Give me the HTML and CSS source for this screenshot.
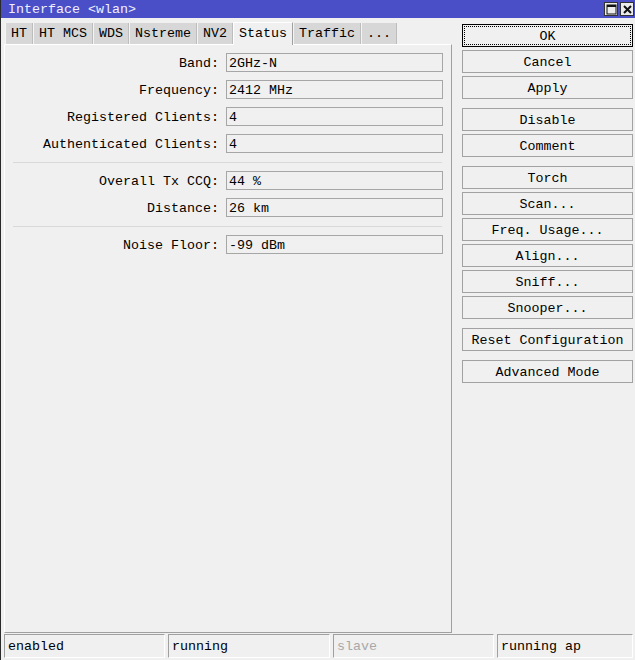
FILE: index.html
```html
<!DOCTYPE html>
<html>
<head>
<meta charset="utf-8">
<link rel="stylesheet" href="styles.css">
</head>
<body>
<div class="window">
  <div class="titlebar">
    <span class="title">Interface &lt;wlan&gt;</span>
    <div class="tb-buttons">
      <span class="tb-btn">
        <svg width="11" height="11" viewBox="0 0 11 11"><rect x="1" y="1" width="9" height="9" fill="none" stroke="#111" stroke-width="1"/><rect x="1" y="1" width="9" height="2" fill="#111"/></svg>
      </span>
      <span class="tb-btn">
        <svg width="11" height="11" viewBox="0 0 11 11"><path d="M2 2 L9 9 M9 2 L2 9" stroke="#111" stroke-width="2"/></svg>
      </span>
    </div>
  </div>
  <div class="main">
    <div class="left">
      <div class="tabs">
        <div class="tab">HT</div>
        <div class="tab">HT MCS</div>
        <div class="tab">WDS</div>
        <div class="tab">Nstreme</div>
        <div class="tab">NV2</div>
        <div class="tab active">Status</div>
        <div class="tab">Traffic</div>
        <div class="tab">...</div>
      </div>
      <div class="panel">
        <div class="row"><div class="label">Band:</div><div class="box">2GHz-N</div></div>
        <div class="row"><div class="label">Frequency:</div><div class="box">2412 MHz</div></div>
        <div class="row"><div class="label">Registered Clients:</div><div class="box">4</div></div>
        <div class="row"><div class="label">Authenticated Clients:</div><div class="box">4</div></div>
        <div class="sep"></div>
        <div class="row"><div class="label">Overall Tx CCQ:</div><div class="box">44 %</div></div>
        <div class="row"><div class="label">Distance:</div><div class="box">26 km</div></div>
        <div class="sep"></div>
        <div class="row"><div class="label">Noise Floor:</div><div class="box">-99 dBm</div></div>
      </div>
    </div>
    <div class="right">
      <div class="group">
        <div class="btn default">OK</div>
        <div class="btn">Cancel</div>
        <div class="btn">Apply</div>
      </div>
      <div class="group">
        <div class="btn">Disable</div>
        <div class="btn">Comment</div>
      </div>
      <div class="group">
        <div class="btn">Torch</div>
        <div class="btn">Scan...</div>
        <div class="btn">Freq. Usage...</div>
        <div class="btn">Align...</div>
        <div class="btn">Sniff...</div>
        <div class="btn">Snooper...</div>
      </div>
      <div class="group">
        <div class="btn">Reset Configuration</div>
      </div>
      <div class="group">
        <div class="btn">Advanced Mode</div>
      </div>
    </div>
  </div>
  <div class="statusbar">
    <div class="sbox s1">enabled</div>
    <div class="sbox s2">running</div>
    <div class="sbox s3 dim">slave</div>
    <div class="sbox s4">running ap</div>
  </div>
</div>
</body>
</html>
```

FILE: styles.css
```css
* { box-sizing: border-box; }
html, body {
  margin: 0;
  padding: 0;
  background: #f0f0f0;
}
body {
  font-family: "Liberation Mono", "DejaVu Sans Mono", monospace;
  font-size: 13.33px;
  color: #000;
}
.window {
  width: 635px;
  height: 660px;
  border-left: 1px solid #2a2a2a;
  display: flex;
  flex-direction: column;
  overflow: hidden;
}
.titlebar {
  height: 18px;
  background: #4b4fc7;
  display: flex;
  align-items: center;
  justify-content: space-between;
  padding-left: 7px;
  padding-right: 1px;
}
.title {
  color: #eeeeff;
  line-height: 18px;
  padding-top: 1px;
}
.tb-buttons {
  display: flex;
  gap: 2px;
}
.tb-btn {
  width: 14px;
  height: 14px;
  background: #ececec;
  border: 1px solid #333;
  display: flex;
  align-items: center;
  justify-content: center;
}
.main {
  height: 615px;
  display: flex;
}
.left {
  width: 448px;
  margin-left: 3px;
  display: flex;
  flex-direction: column;
}
.tabs {
  margin-top: 4px;
  height: 22px;
  display: flex;
  align-items: flex-end;
  padding-left: 1px;
  position: relative;
  z-index: 1;
}
.tab {
  height: 21px;
  line-height: 22px;
  padding: 0 5px;
  background: #d7d7d7;
  border-left: 1px solid #f4f4f4;
  border-right: 1px solid #bdbdbd;
  white-space: nowrap;
}
.tab.active {
  height: 23px;
  margin-bottom: -1px;
  line-height: 22px;
  padding: 0 5px;
  background: #f0f0f0;
  border-left: 1px solid #ffffff;
  border-right: 1px solid #a0a0a0;
  border-top: 1px solid #ffffff;
}
.panel {
  flex: 1;
  border-top: 1px solid #ffffff;
  border-left: 1px solid #ffffff;
  border-right: 1px solid #a0a0a0;
  border-bottom: 1px solid #a0a0a0;
  padding-top: 8px;
  display: flex;
  flex-direction: column;
}
.row {
  display: flex;
  align-items: flex-start;
  height: 19px;
  margin-bottom: 8px;
}
.label {
  width: 214px;
  height: 19px;
  text-align: right;
  white-space: nowrap;
  line-height: 21px;
}
.box {
  margin-left: 7px;
  width: 217px;
  height: 19px;
  border: 1px solid #a6a6a6;
  background: #f0f0f0;
  padding-left: 2px;
  line-height: 19px;
  white-space: nowrap;
}
.sep {
  height: 1px;
  background: #d9d9d9;
  margin: 1px 9px 8px 8px;
}
.right {
  margin-left: 10px;
  width: 171px;
  padding-top: 6px;
  display: flex;
  flex-direction: column;
  gap: 9px;
}
.group {
  display: flex;
  flex-direction: column;
  gap: 3px;
}
.btn {
  height: 23px;
  border: 1px solid #a2a2a2;
  background: #f0f0f0;
  text-align: center;
  line-height: 23px;
  white-space: nowrap;
}
.btn.default {
  border: 1px solid #000;
  outline: 1px dotted #000;
  outline-offset: -3px;
}
.statusbar {
  flex: 1;
  display: flex;
  padding: 1px 2px 2px 3px;
  gap: 3px;
}
.sbox {
  height: 24px;
  border-top: 1px solid #a0a0a0;
  border-left: 1px solid #a0a0a0;
  border-right: 1px solid #ffffff;
  border-bottom: 1px solid #ffffff;
  padding-left: 3px;
  line-height: 24px;
  white-space: nowrap;
}
.s1 { width: 161px; }
.s2 { width: 162px; }
.s3 { width: 161px; }
.s4 { flex: 1; }
.dim { color: #a8a8a8; }
```
